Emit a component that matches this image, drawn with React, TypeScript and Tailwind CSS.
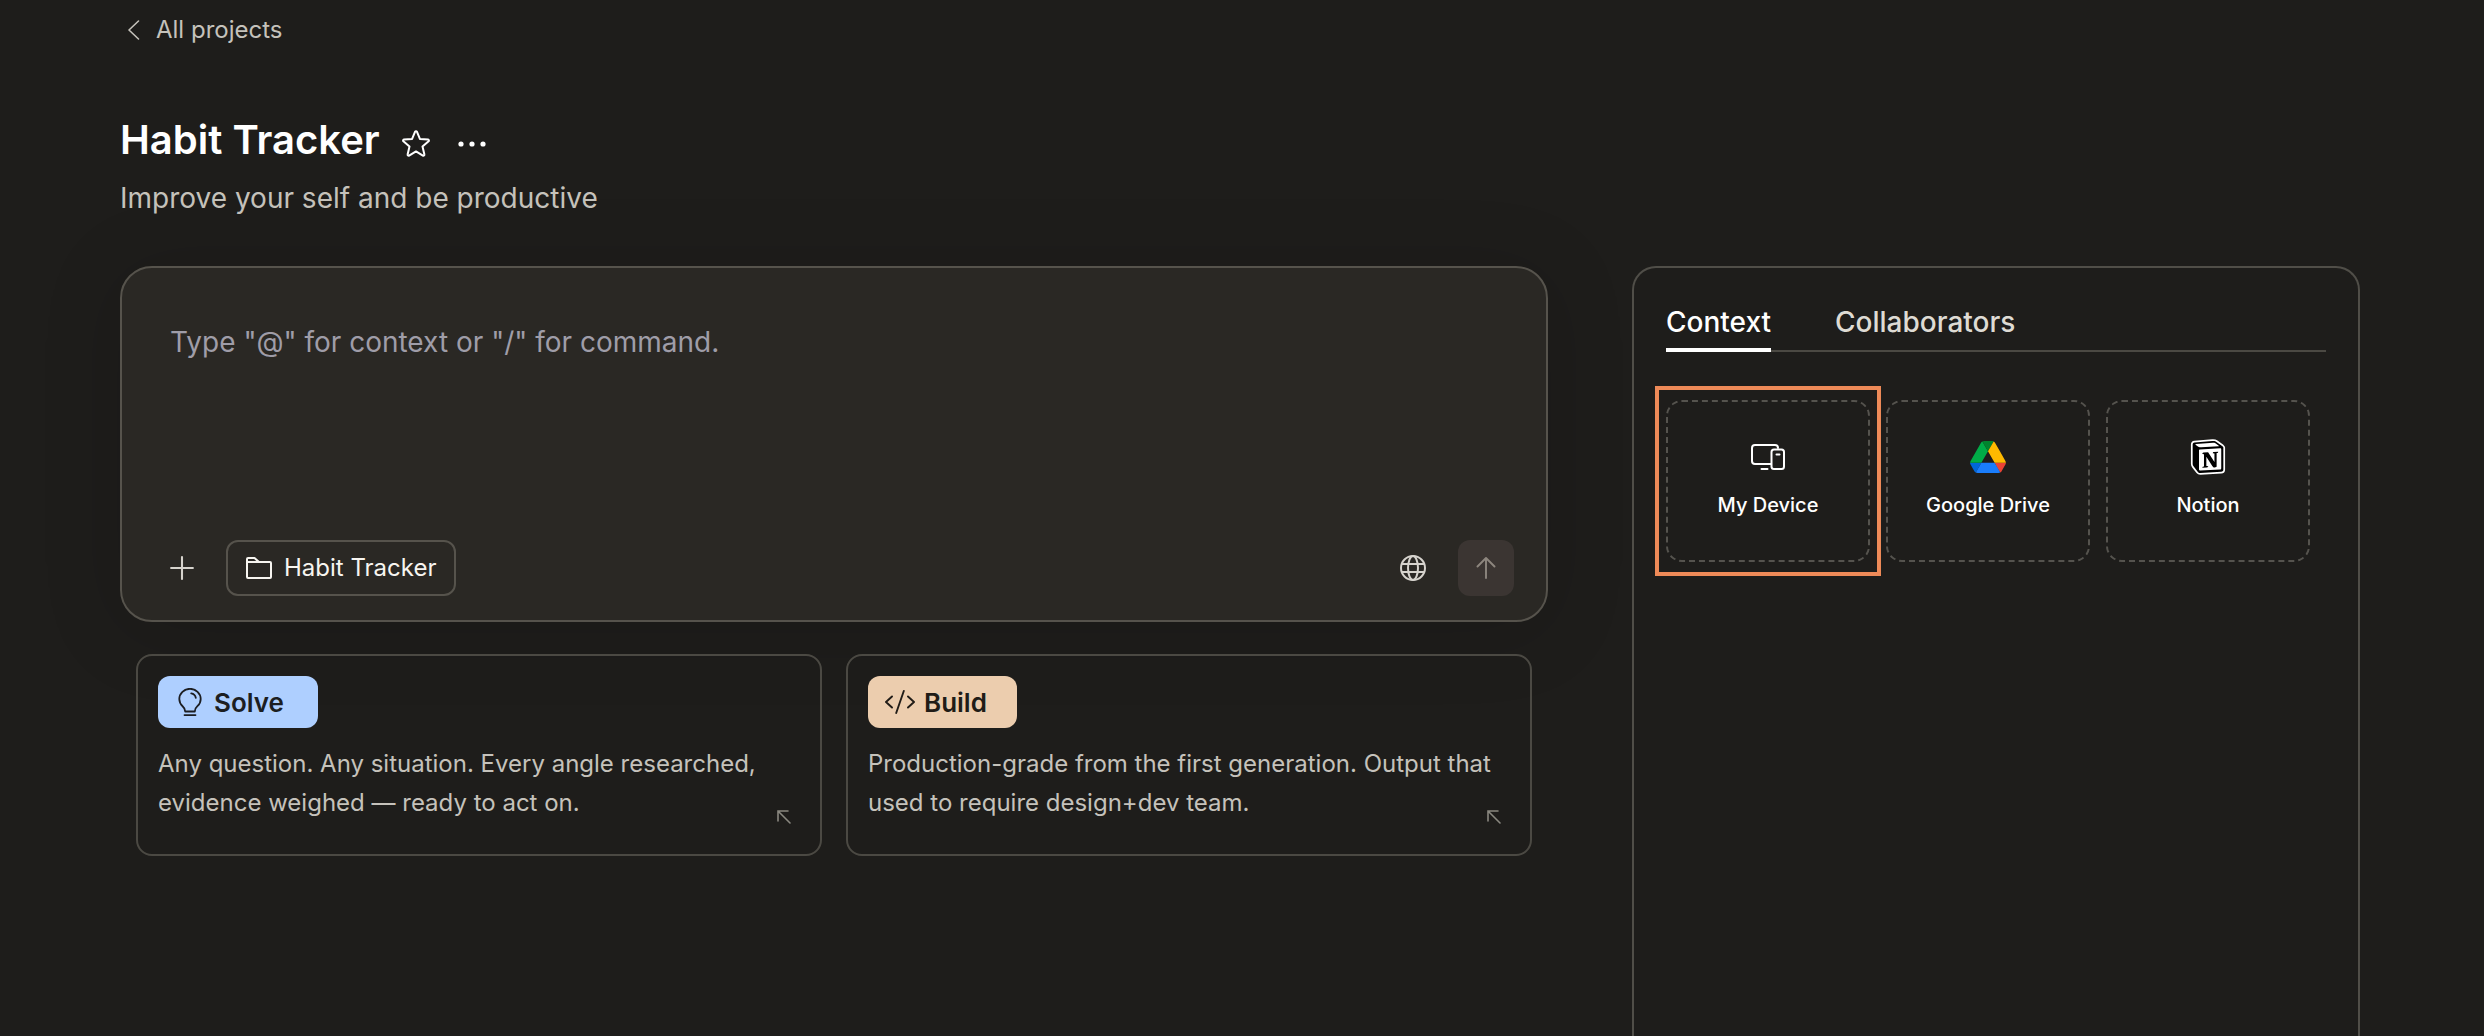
import React, { useState } from 'react';
import { SiNotion } from 'react-icons/si';

type IconProps = { className?: string };

const ChevronLeftIcon = ({ className }: IconProps) => (
  <svg className={className} viewBox="0 0 12 20" fill="none" stroke="currentColor" strokeWidth="1.6" strokeLinecap="round" strokeLinejoin="round">
    <path d="M10.5 1L1 10l9.5 9" />
  </svg>
);

const StarIcon = ({ className }: IconProps) => (
  <svg className={className} viewBox="0 0 28 28" fill="none" stroke="currentColor" strokeWidth="2" strokeLinejoin="round">
    <path d="M13.1 1.700a1 1 0 0 1 1.800 0l3 7.200 8.200.7a1 1 0 0 1 .5 1.700l-6.100 5.200 1.900 8a1 1 0 0 1-1.500 1.100L14 21.400l-6.900 4.200a1 1 0 0 1-1.500-1.100l1.900-8-6.100-5.200a1 1 0 0 1 .5-1.700l8.200-.7z" />
  </svg>
);

const DotsIcon = ({ className }: IconProps) => (
  <svg className={className} viewBox="0 0 28 28" fill="currentColor">
    <circle cx="3" cy="14" r="2.600" />
    <circle cx="14" cy="14" r="2.600" />
    <circle cx="25" cy="14" r="2.600" />
  </svg>
);

const PlusIcon = ({ className }: IconProps) => (
  <svg className={className} viewBox="0 0 22 22" fill="none" stroke="currentColor" strokeWidth="1.900" strokeLinecap="round">
    <path d="M11 1v20M1 11h20" />
  </svg>
);

const FolderIcon = ({ className }: IconProps) => (
  <svg className={className} viewBox="0 0 26 22" fill="none" stroke="currentColor" strokeWidth="2" strokeLinejoin="round">
    <path d="M1 5V2a1 1 0 0 1 1-1h6.500L13 5h11a1 1 0 0 1 1 1v14a1 1 0 0 1-1 1H2a1 1 0 0 1-1-1zM1 5h12" />
  </svg>
);

const GlobeIcon = ({ className }: IconProps) => (
  <svg className={className} viewBox="0 0 26 26" fill="none" stroke="currentColor" strokeWidth="2">
    <circle cx="13" cy="13" r="12" />
    <ellipse cx="13" cy="13" rx="5" ry="12" />
    <path d="M1.800 9h22.400M1.800 17h22.400" />
  </svg>
);

const ArrowUpIcon = ({ className }: IconProps) => (
  <svg className={className} viewBox="0 0 20 22" fill="none" stroke="currentColor" strokeWidth="1.900" strokeLinecap="round" strokeLinejoin="round">
    <path d="M10 21V1M1.500 9.500L10 1l8.500 8.500" />
  </svg>
);

const BulbIcon = ({ className }: IconProps) => (
  <svg className={className} viewBox="0 0 24 28" fill="none" stroke="currentColor" strokeWidth="1.800" strokeLinecap="round" strokeLinejoin="round">
    <path d="M7.200 23.500c0-2.300-1-3.900-2.600-5.300A10 10 0 0 1 1.300 11a10.700 10.200 0 0 1 21.400 0c0 3-1.300 5.400-3.300 7.200-1.600 1.400-2.600 3-2.600 5.300zM6.500 27.100h11M13.200 5.400a5.400 5.400 0 0 1 4.600 4.500" />
  </svg>
);

const CodeIcon = ({ className }: IconProps) => (
  <svg className={className} viewBox="0 0 30 24" fill="none" stroke="currentColor" strokeWidth="1.900" strokeLinecap="round" strokeLinejoin="round">
    <path d="M7 6.500L1 12l6 5.500M23 6.500l6 5.500-6 5.500M18.800 1l-7.600 22" />
  </svg>
);

const ArrowUpLeftIcon = ({ className }: IconProps) => (
  <svg className={className} viewBox="0 0 14 14" fill="none" stroke="currentColor" strokeWidth="1.600" strokeLinecap="round">
    <path d="M13 13L1 1M1 11V1h10" />
  </svg>
);

const DeviceIcon = ({ className }: IconProps) => (
  <svg className={className} viewBox="0 0 34 26" fill="none" stroke="currentColor" strokeWidth="2" strokeLinecap="round" strokeLinejoin="round">
    <path d="M20 20H4a3 3 0 0 1-3-3V4a3 3 0 0 1 3-3h20a3 3 0 0 1 3 3M10.500 25h6M25.500 10.500h3" />
    <rect x="20.500" y="5.500" width="12.500" height="19.500" rx="2.500" />
  </svg>
);

const DriveIcon = ({ className }: IconProps) => (
  <svg className={className} viewBox="0 0 87.300 78">
    <path fill="#0066da" d="m6.600 66.850 3.850 6.650c.8 1.400 1.950 2.500 3.300 3.300l13.750-23.800h-27.500c0 1.550.4 3.100 1.200 4.500z" />
    <path fill="#00ac47" d="m43.650 25-13.750-23.800c-1.350.8-2.500 1.900-3.300 3.300l-25.400 44a9.060 9.060 0 0 0-1.200 4.500h27.500z" />
    <path fill="#ea4335" d="m73.550 76.800c1.350-.8 2.500-1.900 3.300-3.300l1.600-2.750 7.650-13.250c.8-1.400 1.200-2.950 1.200-4.500h-27.502l5.852 11.500z" />
    <path fill="#00832d" d="m43.650 25 13.750-23.800c-1.350-.8-2.900-1.200-4.500-1.200h-18.500c-1.600 0-3.150.45-4.500 1.200z" />
    <path fill="#1a7dfb" d="m59.800 53h-32.300l-13.750 23.800c1.350.8 2.900 1.200 4.500 1.200h50.800c1.600 0 3.150-.45 4.500-1.200z" />
    <path fill="#ffba00" d="m73.400 26.500-12.700-22c-.8-1.400-1.950-2.500-3.300-3.300l-13.750 23.800 16.150 28h27.450c0-1.550-.4-3.100-1.200-4.500z" />
  </svg>
);

// Black mark on a white cube so it stays readable on the dark panel
const NotionIcon = ({ className }: IconProps) => (
  <svg className={className} viewBox="-1.500 -1.500 27 27">
    <path
      d="M1.936 1.035l13.310-.98c1.634-.14 2.055-.047 3.082.7l4.249 2.986c.7.513.934.653.934 1.213v16.378c0 1.026-.373 1.634-1.680 1.726l-15.458.934c-.98.047-1.448-.093-1.962-.747l-3.129-4.060c-.56-.747-.793-1.306-.793-1.866V2.667c0-.719.373-1.540 1.447-1.632z"
      fill="#fff"
      stroke="#fff"
      strokeWidth="2.600"
      strokeLinejoin="round"
    />
    <SiNotion size={24} color="#000" />
  </svg>
);

const TABS = [
  { id: 'context', label: 'Context' },
  { id: 'collaborators', label: 'Collaborators' },
];

const MODES = [
  {
    id: 'solve',
    label: 'Solve',
    icon: <BulbIcon className="h-7 w-6" />,
    pill: 'bg-[#aecfff] text-[#1c1e22] gap-3 pl-5 pr-[34px]',
    text: 'Any question. Any situation. Every angle researched, evidence weighed — ready to act on.',
  },
  {
    id: 'build',
    label: 'Build',
    icon: <CodeIcon className="h-6 w-8" />,
    pill: 'bg-[#eccdae] text-[#211c17] gap-2 pl-4 pr-[30px]',
    text: 'Production-grade from the first generation. Output that used to require design+dev team.',
  },
];

const SOURCES = [
  { id: 'device', label: 'My Device', icon: <DeviceIcon className="h-[26px] w-[34px]" />, active: true },
  { id: 'drive', label: 'Google Drive', icon: <DriveIcon className="h-8 w-9" />, active: false },
  { id: 'notion', label: 'Notion', icon: <NotionIcon className="size-9" />, active: false },
];

const App: React.FC = () => {
  const [activeTab, setActiveTab] = useState('context');
  const [prompt, setPrompt] = useState('');

  return (
    <div className="flex h-screen flex-col overflow-hidden bg-[#1e1d1b] pr-[124px] pl-[120px] font-['Inter',sans-serif] text-white">
      {/* Back link */}
      <a href="#" className="mt-3 flex items-center gap-4 self-start pl-2 text-2xl leading-9 text-[#c5c2bb]">
        <ChevronLeftIcon className="h-5 w-3" />
        All projects
      </a>

      {/* Project title */}
      <header className="mt-[68px]">
        <div className="flex items-center">
          <h1 className="text-[40px] leading-12 font-semibold">Habit Tracker</h1>
          <button aria-label="Add to favourites" className="mt-2 ml-[22px]">
            <StarIcon className="size-7" />
          </button>
          <button aria-label="More options" className="mt-2 ml-7">
            <DotsIcon className="size-7" />
          </button>
        </div>
        <p className="mt-[14px] text-[28px] leading-10 text-[#c5c2bb]">Improve your self and be productive</p>
      </header>

      <div className="mt-12 flex min-h-0 flex-1 items-start gap-[84px]">
        <main className="min-w-0 flex-1">
          {/* Prompt box */}
          <form
            onSubmit={(e) => e.preventDefault()}
            className="rounded-[32px] border-2 border-[#56534c] bg-[#2a2824] pt-[54px] pr-8 pb-6 pl-12 shadow-[0_8px_80px_rgba(0,0,0,0.15)]"
          >
            <textarea
              aria-label="Prompt"
              value={prompt}
              onChange={(e) => setPrompt(e.target.value)}
              placeholder={'Type "@" for context or "/" for command.'}
              className="block h-[218px] w-full resize-none bg-transparent text-[28px] leading-10 outline-none placeholder:text-[#9f9da8]"
            />
            <div className="flex items-center">
              <button type="button" aria-label="Add attachment" className="text-[#d6d3cd]">
                <PlusIcon className="size-6" />
              </button>
              <button type="button" className="ml-8 flex h-14 items-center gap-3 rounded-xl border-2 border-[#56534c] px-[18px] text-2xl text-[#f7f5f0]">
                <FolderIcon className="h-[22px] w-[26px]" />
                Habit Tracker
              </button>
              <button type="button" aria-label="Search the web" className="ml-auto text-[#d6d3cd]">
                <GlobeIcon className="size-[26px]" />
              </button>
              <button type="submit" aria-label="Send" className="ml-8 flex size-14 items-center justify-center rounded-xl bg-[#3b3532] text-[#8d867e]">
                <ArrowUpIcon className="h-[22px] w-5" />
              </button>
            </div>
          </form>

          {/* Modes */}
          <div className="mt-8 grid grid-cols-2 gap-6 px-4">
            {MODES.map((mode) => (
              <div key={mode.id} className="relative rounded-2xl border-2 border-[#4b4943] px-5 pt-5 pb-8">
                <button className={`flex h-[52px] items-center rounded-xl text-[26px] font-semibold ${mode.pill}`}>
                  {mode.icon}
                  {mode.label}
                </button>
                <p className="mt-4 pr-4 text-2xl leading-[39px] text-[#c5c2bb]">{mode.text}</p>
                <ArrowUpLeftIcon className="absolute right-[29px] bottom-[30px] size-[14px] text-[#8a8880]" />
              </div>
            ))}
          </div>
        </main>

        {/* Side panel */}
        <aside className="w-[728px] shrink-0 self-stretch rounded-t-3xl border-2 border-b-0 border-[#504e48] px-8 pt-9">
          <div role="tablist" className="flex gap-16 border-b-2 border-[#4b4943]">
            {TABS.map((tab) => (
              <button
                key={tab.id}
                role="tab"
                aria-selected={activeTab === tab.id}
                onClick={() => setActiveTab(tab.id)}
                className={`-mb-[2px] border-b-4 pb-2 text-[28px] leading-9 font-medium ${activeTab === tab.id ? 'border-white text-white' : 'border-transparent text-[#dedbd4]'}`}
              >
                {tab.label}
              </button>
            ))}
          </div>
          <div className="mt-12 flex gap-4">
            {SOURCES.map((source) => (
              <div key={source.id} className="relative">
                <button className="flex h-[162px] w-[204px] flex-col items-center justify-center rounded-2xl border-2 border-dashed border-[#55534e] pb-1 text-xl font-medium">
                  <span className="flex h-9 items-center">{source.icon}</span>
                  <span className="mt-4">{source.label}</span>
                </button>
                {source.active && <span className="pointer-events-none absolute -inset-x-[11px] -inset-y-[14px] border-4 border-[#ee8a58]" />}
              </div>
            ))}
          </div>
        </aside>
      </div>
    </div>
  );
};

export default App;
